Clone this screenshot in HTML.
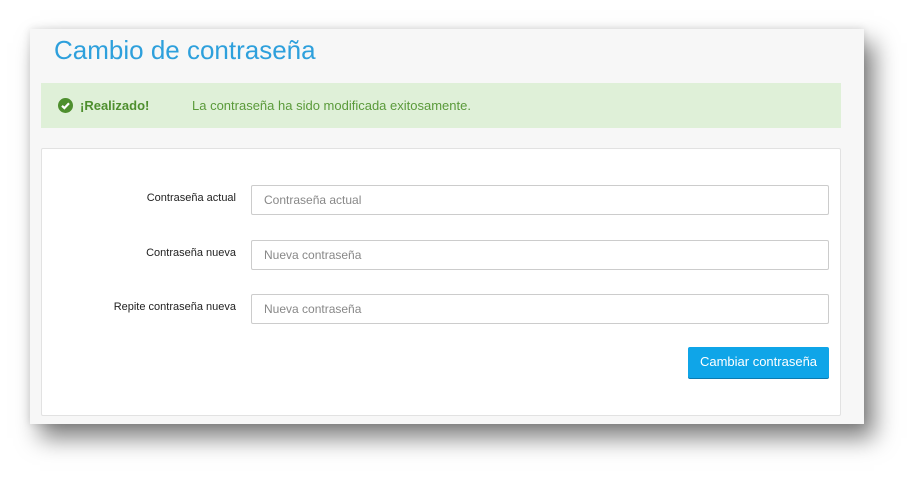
<!DOCTYPE html>
<html><head><meta charset="utf-8"><style>
body{margin:0;width:922px;height:483px;background:#fff;font-family:"Liberation Sans",Arial,sans-serif;position:relative;overflow:hidden}
.page{position:absolute;left:30px;top:29px;width:834px;height:395px;background:#f7f7f7;box-shadow:10px 14px 22px rgba(0,0,0,.5),0 0 8px rgba(0,0,0,.12)}
h1{position:absolute;left:24px;top:6px;margin:0;font-weight:normal;font-size:26px;color:#2ea0dc}
.alert{position:absolute;left:11px;top:54px;width:800px;height:45px;background:#dff0d8;color:#3c763d;font-size:13px}
.alert .ic{position:absolute;left:17px;top:15px;width:15px;height:15px;border-radius:50%;background:#4e8f2e}
.alert b{position:absolute;left:39px;top:15px;color:#4e8f2e}
.alert span{position:absolute;left:151px;top:15px;color:#5a9a3a}
.panel{position:absolute;left:11px;top:119px;width:798px;height:266px;background:#fff;border:1px solid #e2e2e2;border-radius:2px}
.lbl{position:absolute;right:604px;font-size:11px;color:#222}
.inp{position:absolute;left:209px;height:28px;border:1px solid #ccc;border-radius:2px;font-size:12px;color:#888;line-height:28px;padding-left:12px;box-sizing:content-box}
.btn{position:absolute;left:646px;top:198px;width:141px;height:31px;background:#0fa5e8;border-radius:2px;color:#fff;font-size:13px;line-height:30px;text-align:center;box-shadow:0 1px 0 #0a7ab0}
</style></head><body>
<div class="page">
<h1>Cambio de contraseña</h1>
<div class="alert"><div class="ic"><svg width="15" height="15" viewBox="0 0 15 15"><path d="M4 7.8l2.4 2.3 4.6-4.8" stroke="#fff" stroke-width="2.2" fill="none"/></svg></div><b>¡Realizado!</b><span>La contraseña ha sido modificada exitosamente.</span></div>
<div class="panel">
<div class="lbl" style="top:43px">Contraseña actual</div>
<div class="inp" style="top:36px;width:564px">Contraseña actual</div>
<div class="lbl" style="top:98px">Contraseña nueva</div>
<div class="inp" style="top:91px;width:564px">Nueva contraseña</div>
<div class="lbl" style="top:152px">Repite contraseña nueva</div>
<div class="inp" style="top:145px;width:564px">Nueva contraseña</div>
<div class="btn">Cambiar contraseña</div>
</div>
</div>
</body></html>
